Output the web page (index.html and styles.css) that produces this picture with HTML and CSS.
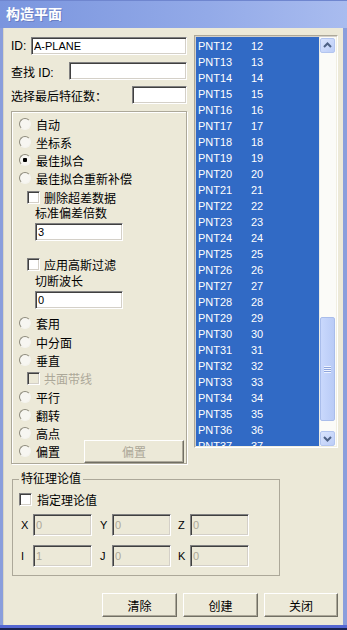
FILE: index.html
```html
<!DOCTYPE html>
<html lang="zh">
<head>
  <meta charset="UTF-8" />
  <title>构造平面</title>
  <link rel="stylesheet" href="styles.css">
</head>
<body>

  <div class="window">
    <div class="titlebar">构造平面</div>

    <div class="client">
      <div class="top">
        <div class="left-col">
          <div class="field-row">
            <label class="lbl lbl-id">ID:</label>
            <input class="edit" type="text" value="A-PLANE">
          </div>
          <div class="field-row row2">
            <label class="lbl lbl-find">查找 ID:</label>
            <input class="edit" type="text" value="">
          </div>
          <div class="field-row row3">
            <label class="lbl lbl-last">选择最后特征数：</label>
            <input class="edit" type="text" value="">
          </div>

          <div class="group options">
            <div class="opt"><input class="radio" type="radio" name="m"><span>自动</span></div>
            <div class="opt"><input class="radio" type="radio" name="m"><span>坐标系</span></div>
            <div class="opt"><input class="radio" type="radio" name="m" checked><span>最佳拟合</span></div>
            <div class="opt"><input class="radio" type="radio" name="m"><span>最佳拟合重新补偿</span></div>

            <div class="opt sub chk-del"><input class="check" type="checkbox"><span>删除超差数据</span></div>
            <div class="sub-label">标准偏差倍数</div>
            <input class="edit small" type="text" value="3">

            <div class="opt sub chk-gauss"><input class="check" type="checkbox"><span>应用高斯过滤</span></div>
            <div class="sub-label">切断波长</div>
            <input class="edit small" type="text" value="0">

            <div class="opt first-after"><input class="radio" type="radio" name="m"><span>套用</span></div>
            <div class="opt gap1"><input class="radio" type="radio" name="m"><span>中分面</span></div>
            <div class="opt"><input class="radio" type="radio" name="m"><span>垂直</span></div>
            <div class="opt sub disabled"><input class="check" type="checkbox" disabled><span>共面带线</span></div>
            <div class="opt gap1"><input class="radio" type="radio" name="m"><span>平行</span></div>
            <div class="opt"><input class="radio" type="radio" name="m"><span>翻转</span></div>
            <div class="opt"><input class="radio" type="radio" name="m"><span>高点</span></div>
            <div class="opt last">
              <input class="radio" type="radio" name="m"><span>偏置</span>
              <button class="btn btn-offset" disabled>偏置</button>
            </div>
          </div>
        </div>

        <div class="listbox">
          <div class="list-items">
            <div class="item"><span class="c1">PNT12</span><span>12</span></div>
            <div class="item"><span class="c1">PNT13</span><span>13</span></div>
            <div class="item"><span class="c1">PNT14</span><span>14</span></div>
            <div class="item"><span class="c1">PNT15</span><span>15</span></div>
            <div class="item"><span class="c1">PNT16</span><span>16</span></div>
            <div class="item"><span class="c1">PNT17</span><span>17</span></div>
            <div class="item"><span class="c1">PNT18</span><span>18</span></div>
            <div class="item"><span class="c1">PNT19</span><span>19</span></div>
            <div class="item"><span class="c1">PNT20</span><span>20</span></div>
            <div class="item"><span class="c1">PNT21</span><span>21</span></div>
            <div class="item"><span class="c1">PNT22</span><span>22</span></div>
            <div class="item"><span class="c1">PNT23</span><span>23</span></div>
            <div class="item"><span class="c1">PNT24</span><span>24</span></div>
            <div class="item"><span class="c1">PNT25</span><span>25</span></div>
            <div class="item"><span class="c1">PNT26</span><span>26</span></div>
            <div class="item"><span class="c1">PNT27</span><span>27</span></div>
            <div class="item"><span class="c1">PNT28</span><span>28</span></div>
            <div class="item"><span class="c1">PNT29</span><span>29</span></div>
            <div class="item"><span class="c1">PNT30</span><span>30</span></div>
            <div class="item"><span class="c1">PNT31</span><span>31</span></div>
            <div class="item"><span class="c1">PNT32</span><span>32</span></div>
            <div class="item"><span class="c1">PNT33</span><span>33</span></div>
            <div class="item"><span class="c1">PNT34</span><span>34</span></div>
            <div class="item"><span class="c1">PNT35</span><span>35</span></div>
            <div class="item"><span class="c1">PNT36</span><span>36</span></div>
            <div class="item"><span class="c1">PNT37</span><span>37</span></div>
          </div>
          <div class="scrollbar">
            <div class="sb-btn">
              <svg width="13" height="13" viewBox="0 0 13 13"><polyline points="3,8 6.5,4.5 10,8" fill="none" stroke="#4d6185" stroke-width="2"/></svg>
            </div>
            <div class="sb-thumb">
              <div class="grip"></div>
            </div>
            <div class="sb-btn down">
              <svg width="13" height="13" viewBox="0 0 13 13"><polyline points="3,5 6.5,8.5 10,5" fill="none" stroke="#4d6185" stroke-width="2"/></svg>
            </div>
          </div>
        </div>
      </div>

      <fieldset class="theory">
        <legend>特征理论值</legend>
        <div class="opt"><input class="check" type="checkbox"><span>指定理论值</span></div>
        <div class="vec-row">
          <label class="axis">X</label><input class="edit off" type="text" value="0" disabled>
          <label class="axis">Y</label><input class="edit off" type="text" value="0" disabled>
          <label class="axis">Z</label><input class="edit off" type="text" value="0" disabled>
        </div>
        <div class="vec-row second">
          <label class="axis">I</label><input class="edit off" type="text" value="1" disabled>
          <label class="axis">J</label><input class="edit off" type="text" value="0" disabled>
          <label class="axis">K</label><input class="edit off" type="text" value="0" disabled>
        </div>
      </fieldset>

      <div class="buttons">
        <button class="btn wide">清除</button>
        <button class="btn wide">创建</button>
        <button class="btn">关闭</button>
      </div>
    </div>
  </div>

</body>
</html>
```

FILE: styles.css
```css
* {
  box-sizing: border-box;
}

body {
  margin: 0;
  font-family: "Liberation Sans", "Noto Sans CJK SC", sans-serif;
  font-size: 12px;
  color: #000;
}

.window {
  width: 347px;
  height: 630px;
  display: flex;
  flex-direction: column;
  background: linear-gradient(to bottom, #8a9edc 0, #8a9edc 625px, #5567d2 625px, #5567d2 628px, #18224f 628px);
}

.titlebar {
  height: 28px;
  line-height: 27px;
  padding-left: 6px;
  color: #fff;
  font-size: 14px;
  font-weight: bold;
  background: linear-gradient(to right, #7a95de, #93aae8 60%, #a9bcef);
  border-top: 1px solid #6f86cf;
  text-shadow: 1px 1px 0 #6a7fc4;
}

.client {
  height: 597px;
  margin: 0 4px 0 3px;
  padding: 7px 5px 0 8px;
  background: #ece9d8;
  border-left: 1px solid #d9d6c6;
}

.top {
  display: flex;
  align-items: flex-start;
}

.left-col {
  width: 176px;
  margin-top: 2px;
  margin-left: -1px;
}

.field-row {
  display: flex;
  align-items: center;
  height: 18px;
}

.row2 {
  margin-top: 7px;
}

.row3 {
  margin-top: 6px;
}

.lbl {
  flex: none;
  white-space: nowrap;
}

.lbl-id { width: 20px; }
.lbl-find { width: 58px; }
.lbl-last { width: 121px; }

.edit {
  flex: 1;
  min-width: 0;
  height: 18px;
  margin: 0;
  padding: 0 2px;
  font-family: "Liberation Sans", sans-serif;
  font-size: 11px;
  color: #000;
  background: #fff;
  border: 1px solid;
  border-color: #808080 #fff #fff #808080;
  box-shadow: inset 1px 1px #404040, inset -1px -1px #d4d0c8;
  outline: none;
}

.group {
  margin-top: 7px;
  height: 353px;
  padding: 3px 2px 3px 7px;
  border: 1px solid #aca899;
  box-shadow: inset 1px 1px #fff, 1px 1px #fff;
}

.opt {
  display: flex;
  align-items: center;
  height: 18px;
  white-space: nowrap;
}

.opt span {
  margin-left: 5px;
}

.radio {
  appearance: none;
  flex: none;
  width: 12px;
  height: 12px;
  margin: 0;
  border-radius: 50%;
  background: #f7f6f1;
  border: 1px solid;
  border-color: #8e8b7d #f4f3ee #f4f3ee #8e8b7d;
}

.radio:checked {
  background: radial-gradient(circle, #000 0, #000 2px, #f7f6f1 2.5px);
}

.check {
  appearance: none;
  flex: none;
  width: 13px;
  height: 13px;
  margin: 0;
  background: #fff;
  border: 1px solid;
  border-color: #808080 #fff #fff #808080;
  box-shadow: inset 1px 1px #404040, inset -1px -1px #d4d0c8;
}

.check:disabled {
  background: #ece9d8;
}

.opt.sub {
  padding-left: 8px;
}

.opt.sub span {
  margin-left: 4px;
}

.chk-del {
  margin-top: 1px;
}

.chk-gauss {
  margin-top: 14px;
}

.sub-label {
  height: 17px;
  line-height: 17px;
  padding-left: 16px;
}

.chk-gauss + .sub-label {
  margin-top: 1px;
}

.edit.small {
  display: block;
  width: 88px;
  margin-left: 16px;
}

.first-after {
  margin-top: 5px;
}

.gap1 {
  margin-top: 1px;
}

.disabled span {
  color: #aca899;
}

.last .btn-offset {
  margin-left: auto;
}

.btn {
  height: 24px;
  padding: 0;
  font-family: "Liberation Sans", "Noto Sans CJK SC", sans-serif;
  font-size: 12px;
  color: #000;
  background: #ece9d8;
  border: 1px solid;
  border-color: #fff #716f64 #716f64 #fff;
  box-shadow: inset -1px -1px #aca899;
}

.btn-offset {
  width: 100px;
  height: 23px;
}

.btn:disabled {
  color: #aca899;
}

.listbox {
  display: flex;
  width: 144px;
  height: 413px;
  margin-left: 7px;
  background: #fff;
  border: 1px solid;
  border-color: #aca899 #fff #fff #aca899;
  box-shadow: inset 1px 1px #d4d0c8, inset -1px -1px #f1efe2;
  padding: 1px;
}

.list-items {
  width: 123px;
  padding-top: 1px;
  overflow: hidden;
  background: #316ac5;
  color: #fff;
  font-size: 11px;
}

.item {
  display: flex;
  height: 16px;
  line-height: 16px;
  padding-left: 2px;
}

.item .c1 {
  width: 53px;
}

.scrollbar {
  width: 17px;
  display: flex;
  flex-direction: column;
  background: #fbfbf8;
  border-left: 1px solid #eeede5;
}

.sb-btn {
  width: 15px;
  height: 15px;
  margin: 1px 0 0 0;
  display: flex;
  align-items: center;
  justify-content: center;
  background: linear-gradient(to bottom right, #d9e4fd, #bccdf7);
  border: 1px solid #b3c5ef;
  border-radius: 2px;
}

.sb-btn.down {
  margin-top: auto;
  margin-bottom: 0;
}

.sb-thumb {
  width: 15px;
  height: 104px;
  margin-top: 264px;
  display: flex;
  align-items: center;
  justify-content: center;
  background: linear-gradient(to right, #c9d8fc, #b9cbf6);
  border: 1px solid #a9bdeb;
  border-radius: 2px;
}

.grip {
  width: 7px;
  height: 7px;
  background: repeating-linear-gradient(to bottom, #eef3fe 0, #eef3fe 1px, #8ea5dc 1px, #8ea5dc 2px);
}

.theory {
  margin: 8px 0 0 0;
  width: 268px;
  height: 104px;
  padding: 4px 6px 0 6px;
  border: 1px solid #aca899;
  min-width: 0;
}

.theory legend {
  padding: 0 2px;
  line-height: 14px;
}

.vec-row {
  display: flex;
  align-items: center;
  height: 22px;
  margin-top: 6px;
  padding-left: 2px;
}

.vec-row.second {
  margin-top: 9px;
}

.axis {
  width: 12px;
  flex: none;
  font-size: 11px;
}

.edit.off {
  flex: none;
  width: 59px;
  height: 22px;
  margin-right: 8px;
  color: #aca899;
  background: #ece9d8;
}

.edit.off:nth-of-type(2) {
  margin-right: 7px;
}

.buttons {
  display: flex;
  justify-content: flex-end;
  gap: 6px;
  margin-top: 17px;
}

.buttons .btn {
  width: 74px;
}

.buttons .btn.wide {
  width: 75px;
}
```
